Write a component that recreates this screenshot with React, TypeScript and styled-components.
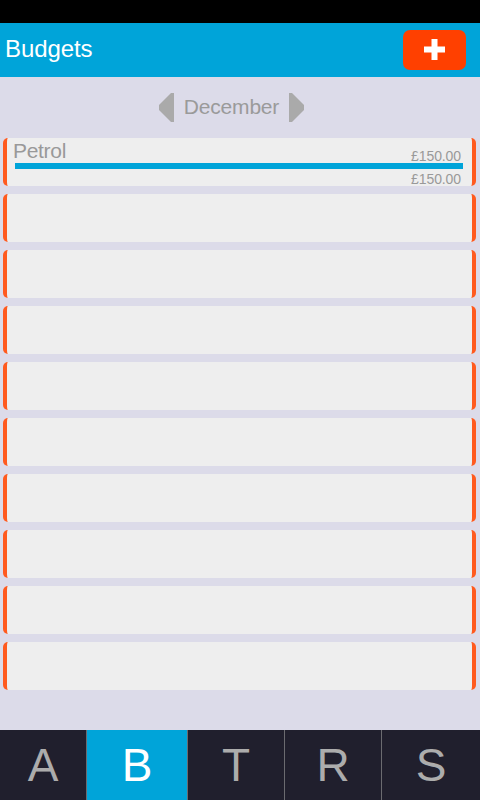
import React, { FC } from 'react'
import styled, { createGlobalStyle } from 'styled-components'

const GlobalStyle = createGlobalStyle`
    html, body {
        margin: 0px;
        padding: 0px;
        background: #dcdbe9;
        font-family: "Liberation Sans", Arial, sans-serif;
    }
`

const Screen = styled.div`
    display: flex;
    flex-direction: column;
    width: 480px;
    height: 800px;
    background: #dcdbe9;
    overflow: hidden;
`

const StatusBar = styled.div`
    height: 23px;
    background: #000000;
`

const Header = styled.div`
    display: flex;
    align-items: center;
    justify-content: space-between;
    height: 54px;
    padding: 0 14px 0 5px;
    background: #00a4d9;
`

const Title = styled.div`
    color: #ffffff;
    font-size: 24px;
    letter-spacing: -0.1px;
    margin-top: -2px;
`

const AddButton = styled.div`
    display: flex;
    align-items: center;
    justify-content: center;
    width: 63px;
    height: 40px;
    margin-top: -1px;
    border-radius: 7px;
    background: #ff4000;
`

const MonthNav = styled.div`
    display: flex;
    align-items: center;
    justify-content: center;
    gap: 10px;
    height: 60px;
    padding-right: 17px;
`

const MonthLabel = styled.div`
    color: #9a9a9a;
    font-size: 21px;
    letter-spacing: -0.2px;
    margin-top: 0px;
`

const List = styled.div`
    display: flex;
    flex-direction: column;
    gap: 8px;
    padding: 1px 4px 0 3px;
`

const Card = styled.div`
    height: 48px;
    background: #eeeeee;
    border-left: 4px solid #ff5a1f;
    border-right: 4px solid #ff5a1f;
    border-radius: 5px;
    box-sizing: border-box;
`

const CardTop = styled.div`
    display: flex;
    justify-content: space-between;
    align-items: flex-end;
    padding: 1px 11px 0 6px;
    height: 23px;
`

const Name = styled.div`
    color: #999999;
    font-size: 21px;
    letter-spacing: -0.3px;
    line-height: 22px;
`

const Amount = styled.div`
    color: #999999;
    font-size: 14px;
    letter-spacing: -0.1px;
    line-height: 14px;
    margin-bottom: -1px;
`

const Bar = styled.div`
    height: 6px;
    margin: 1px 9px 0 8px;
    background: #00a4d9;
`

const CardBottom = styled.div`
    display: flex;
    justify-content: flex-end;
    padding: 3px 11px 0 0;
`

const Spacer = styled.div`
    flex: 1;
`

const TabBar = styled.div`
    display: flex;
    height: 70px;
    background: #201f2d;
`

const Tab = styled.div<{ $active?: boolean; $w: number }>`
    display: flex;
    align-items: center;
    justify-content: center;
    width: ${p => p.$w}px;
    box-sizing: border-box;
    border-left: 1px solid #6b6b70;
    background: ${p => (p.$active ? '#00a4d9' : 'transparent')};
    color: ${p => (p.$active ? '#ffffff' : '#acacac')};
    font-size: 46px;
    &:first-child {
        border-left: none;
    }
`

const Arrow: FC<{ dir: 'left' | 'right' }> = ({ dir }) => (
    <svg width="15" height="29" viewBox="0 0 15 29">
        <path
            d={dir === 'left' ? 'M15 0 L15 29 L12 29 L0 17 L0 12 L12 0 Z' : 'M0 0 L0 29 L3 29 L15 17 L15 12 L3 0 Z'}
            fill="#aaaaaa"
        />
    </svg>
)

const Plus: FC = () => (
    <svg width="21" height="21" viewBox="0 0 21 21">
        <path d="M7.5 0 H13.5 V7.5 H21 V13.5 H13.5 V21 H7.5 V13.5 H0 V7.5 H7.5 Z" fill="#ffffff" />
    </svg>
)

const tabs = [
    { label: 'A', w: 86 },
    { label: 'B', w: 101, active: true },
    { label: 'T', w: 97 },
    { label: 'R', w: 97 },
    { label: 'S', w: 99 }
]

const App: FC = () => {
    const empty = Array.from({ length: 9 })
    return (
        <Screen>
            <GlobalStyle />
            <StatusBar />
            <Header>
                <Title>Budgets</Title>
                <AddButton>
                    <Plus />
                </AddButton>
            </Header>
            <MonthNav>
                <Arrow dir="left" />
                <MonthLabel>December</MonthLabel>
                <Arrow dir="right" />
            </MonthNav>
            <List>
                <Card>
                    <CardTop>
                        <Name>Petrol</Name>
                        <Amount>£150.00</Amount>
                    </CardTop>
                    <Bar />
                    <CardBottom>
                        <Amount>£150.00</Amount>
                    </CardBottom>
                </Card>
                {empty.map((_, i) => (
                    <Card key={i} />
                ))}
            </List>
            <Spacer />
            <TabBar>
                {tabs.map(t => (
                    <Tab key={t.label} $w={t.w} $active={t.active}>
                        {t.label}
                    </Tab>
                ))}
            </TabBar>
        </Screen>
    )
}

export default App
